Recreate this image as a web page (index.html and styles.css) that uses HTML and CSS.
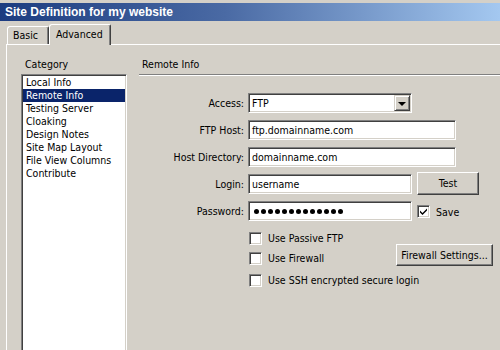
FILE: index.html
```html
<!DOCTYPE html>
<html>
<head>
<meta charset="utf-8">
<link rel="stylesheet" href="styles.css">
</head>
<body>
<div class="titlebar">Site Definition for my website</div>
<div class="tabs">
  <div class="tab tab-basic">Basic</div>
  <div class="tab tab-active">Advanced</div>
</div>
<div class="panel">
  <div class="left">
    <div class="caption">Category</div>
    <div class="listbox">
      <div class="item">Local Info</div>
      <div class="item selected">Remote Info</div>
      <div class="item">Testing Server</div>
      <div class="item">Cloaking</div>
      <div class="item">Design Notes</div>
      <div class="item">Site Map Layout</div>
      <div class="item">File View Columns</div>
      <div class="item">Contribute</div>
    </div>
  </div>
  <div class="right">
    <div class="heading">Remote Info</div>
    <div class="separator"></div>
    <div class="form">
      <div class="row">
        <div class="label">Access:</div>
        <div class="field select"><span class="value">FTP</span><span class="dropbtn"><span class="arrow"></span></span></div>
      </div>
      <div class="row">
        <div class="label">FTP Host:</div>
        <div class="field wide"><span class="value">ftp.domainname.com</span></div>
      </div>
      <div class="row">
        <div class="label">Host Directory:</div>
        <div class="field wide"><span class="value">domainname.com</span></div>
      </div>
      <div class="row">
        <div class="label">Login:</div>
        <div class="field narrow"><span class="value">username</span></div>
        <div class="button test">Test</div>
      </div>
      <div class="row">
        <div class="label">Password:</div>
        <div class="field narrow"><span class="dots"><i></i><i></i><i></i><i></i><i></i><i></i><i></i><i></i><i></i><i></i><i></i><i></i><i></i></span></div>
        <div class="check save"><span class="box"><svg width="9" height="9" viewBox="0 0 9 9"><path d="M1 3.5 L3.5 6 L8 1.5 L8 3.5 L3.5 8 L1 5.5 Z" fill="#000"/></svg></span><span class="ctext">Save</span></div>
      </div>
      <div class="row crow first">
        <div class="check"><span class="box"></span><span class="ctext">Use Passive FTP</span></div>
      </div>
      <div class="row crow">
        <div class="check"><span class="box"></span><span class="ctext">Use Firewall</span></div>
        <div class="button firewall">Firewall Settings...</div>
      </div>
      <div class="row crow ssh">
        <div class="check"><span class="box"></span><span class="ctext">Use SSH encrypted secure login</span></div>
      </div>
    </div>
  </div>
</div>
</body>
</html>
```
FILE: styles.css
```css
html, body {
  margin: 0;
  padding: 0;
}
body {
  width: 500px;
  height: 350px;
  overflow: hidden;
  background: #d4d0c8;
  font-family: "DejaVu Sans Condensed", "Liberation Sans", Arial, sans-serif;
  font-size: 10.5px;
  color: #000;
}
.titlebar {
  margin-top: 3px;
  height: 18px;
  line-height: 18px;
  padding-left: 5px;
  color: #fff;
  font-family: "Liberation Sans", Arial, sans-serif;
  font-weight: bold;
  font-size: 12px;
  background: linear-gradient(to right, #1c3c80, #4a6aa4 45%, #a4c8f0);
}
.tabs {
  display: flex;
  align-items: flex-end;
  height: 23px;
  padding-left: 7px;
  position: relative;
  z-index: 1;
}
.tab {
  box-sizing: border-box;
  background: #d4d0c8;
  border-top: 1px solid #fff;
  border-left: 1px solid #fff;
  border-right: 1px solid #404040;
  box-shadow: inset -1px 0 #808080;
  border-radius: 3px 2px 0 0;
}
.tab-basic {
  width: 42px;
  height: 18px;
  line-height: 17px;
  padding-left: 5px;
}
.tab-active {
  width: 62px;
  height: 21px;
  margin-bottom: -1px;
  line-height: 16px;
  padding-left: 6px;
  padding-top: 1px;
}
.panel {
  display: flex;
  margin-left: 6px;
  border-top: 1px solid #fff;
  border-left: 1px solid #fff;
  height: 305px;
  overflow: hidden;
}
.left {
  padding-left: 14px;
  padding-top: 13px;
  width: 106px;
  flex: none;
}
.caption {
  height: 13px;
  line-height: 13px;
  padding-left: 4px;
  margin-bottom: 3px;
}
.listbox {
  box-sizing: border-box;
  width: 106px;
  height: 290px;
  background: #fff;
  border: 1px solid;
  border-color: #808080 #fff #fff #808080;
  box-shadow: inset 1px 1px #404040, inset -1px -1px #d4d0c8;
  padding: 1px;
}
.item {
  height: 13px;
  line-height: 13px;
  padding-left: 3px;
  white-space: nowrap;
}
.item.selected {
  background: #0a246a;
  color: #fff;
}
.right {
  flex: 1;
  margin-left: 12px;
  padding-top: 13px;
}
.heading {
  height: 13px;
  line-height: 13px;
  padding-left: 3px;
  margin-bottom: 3px;
}
.separator {
  border-top: 1px solid #808080;
  border-bottom: 1px solid #fff;
}
.form {
  padding-top: 17px;
}
.row {
  display: flex;
  align-items: center;
  height: 20px;
  margin-bottom: 7px;
}
.label {
  width: 105px;
  margin-right: 4px;
  text-align: right;
  white-space: nowrap;
}
.field {
  box-sizing: border-box;
  height: 20px;
  background: #fff;
  border: 1px solid;
  border-color: #808080 #fff #fff #808080;
  box-shadow: inset 1px 1px #404040, inset -1px -1px #d4d0c8;
  padding: 1px 1px 1px 3px;
  display: flex;
  align-items: center;
  white-space: nowrap;
}
.select {
  width: 164px;
  justify-content: space-between;
  padding-right: 1px;
}
.wide {
  width: 208px;
}
.narrow {
  width: 164px;
}
.dropbtn {
  box-sizing: border-box;
  width: 16px;
  height: 16px;
  background: #d4d0c8;
  border: 1px solid;
  border-color: #d4d0c8 #404040 #404040 #d4d0c8;
  box-shadow: inset 1px 1px #fff, inset -1px -1px #808080;
  display: flex;
  align-items: center;
  justify-content: center;
}
.arrow {
  width: 0;
  height: 0;
  border-left: 4px solid transparent;
  border-right: 4px solid transparent;
  border-top: 4px solid #000;
  margin-top: 1px;
}
.button {
  box-sizing: border-box;
  background: #d4d0c8;
  border: 1px solid;
  border-color: #fff #404040 #404040 #fff;
  box-shadow: inset -1px -1px #808080;
  display: flex;
  align-items: center;
  justify-content: center;
  white-space: nowrap;
}
.test {
  width: 62px;
  height: 23px;
  margin-left: 5px;
  margin-top: -2px;
}
.dots {
  display: flex;
  gap: 2px;
  padding-left: 2px;
}
.dots i {
  display: block;
  width: 5px;
  height: 5px;
  border-radius: 50%;
  background: #000;
}
.check {
  display: flex;
  align-items: center;
  white-space: nowrap;
}
.box {
  box-sizing: border-box;
  width: 13px;
  height: 13px;
  background: #fff;
  border: 1px solid;
  border-color: #808080 #fff #fff #808080;
  box-shadow: inset 1px 1px #404040, inset -1px -1px #d4d0c8;
  display: flex;
  align-items: center;
  justify-content: center;
}
.ctext {
  margin-left: 6px;
}
.save {
  margin-left: 5px;
  margin-top: 1px;
}
.crow {
  padding-left: 110px;
  margin-bottom: 0;
}
.crow.first {
  margin-top: 1px;
}
.crow.ssh {
  margin-top: 2px;
}
.firewall {
  width: 97px;
  height: 22px;
  margin-left: auto;
  margin-right: 7px;
  margin-top: -6px;
}
```
